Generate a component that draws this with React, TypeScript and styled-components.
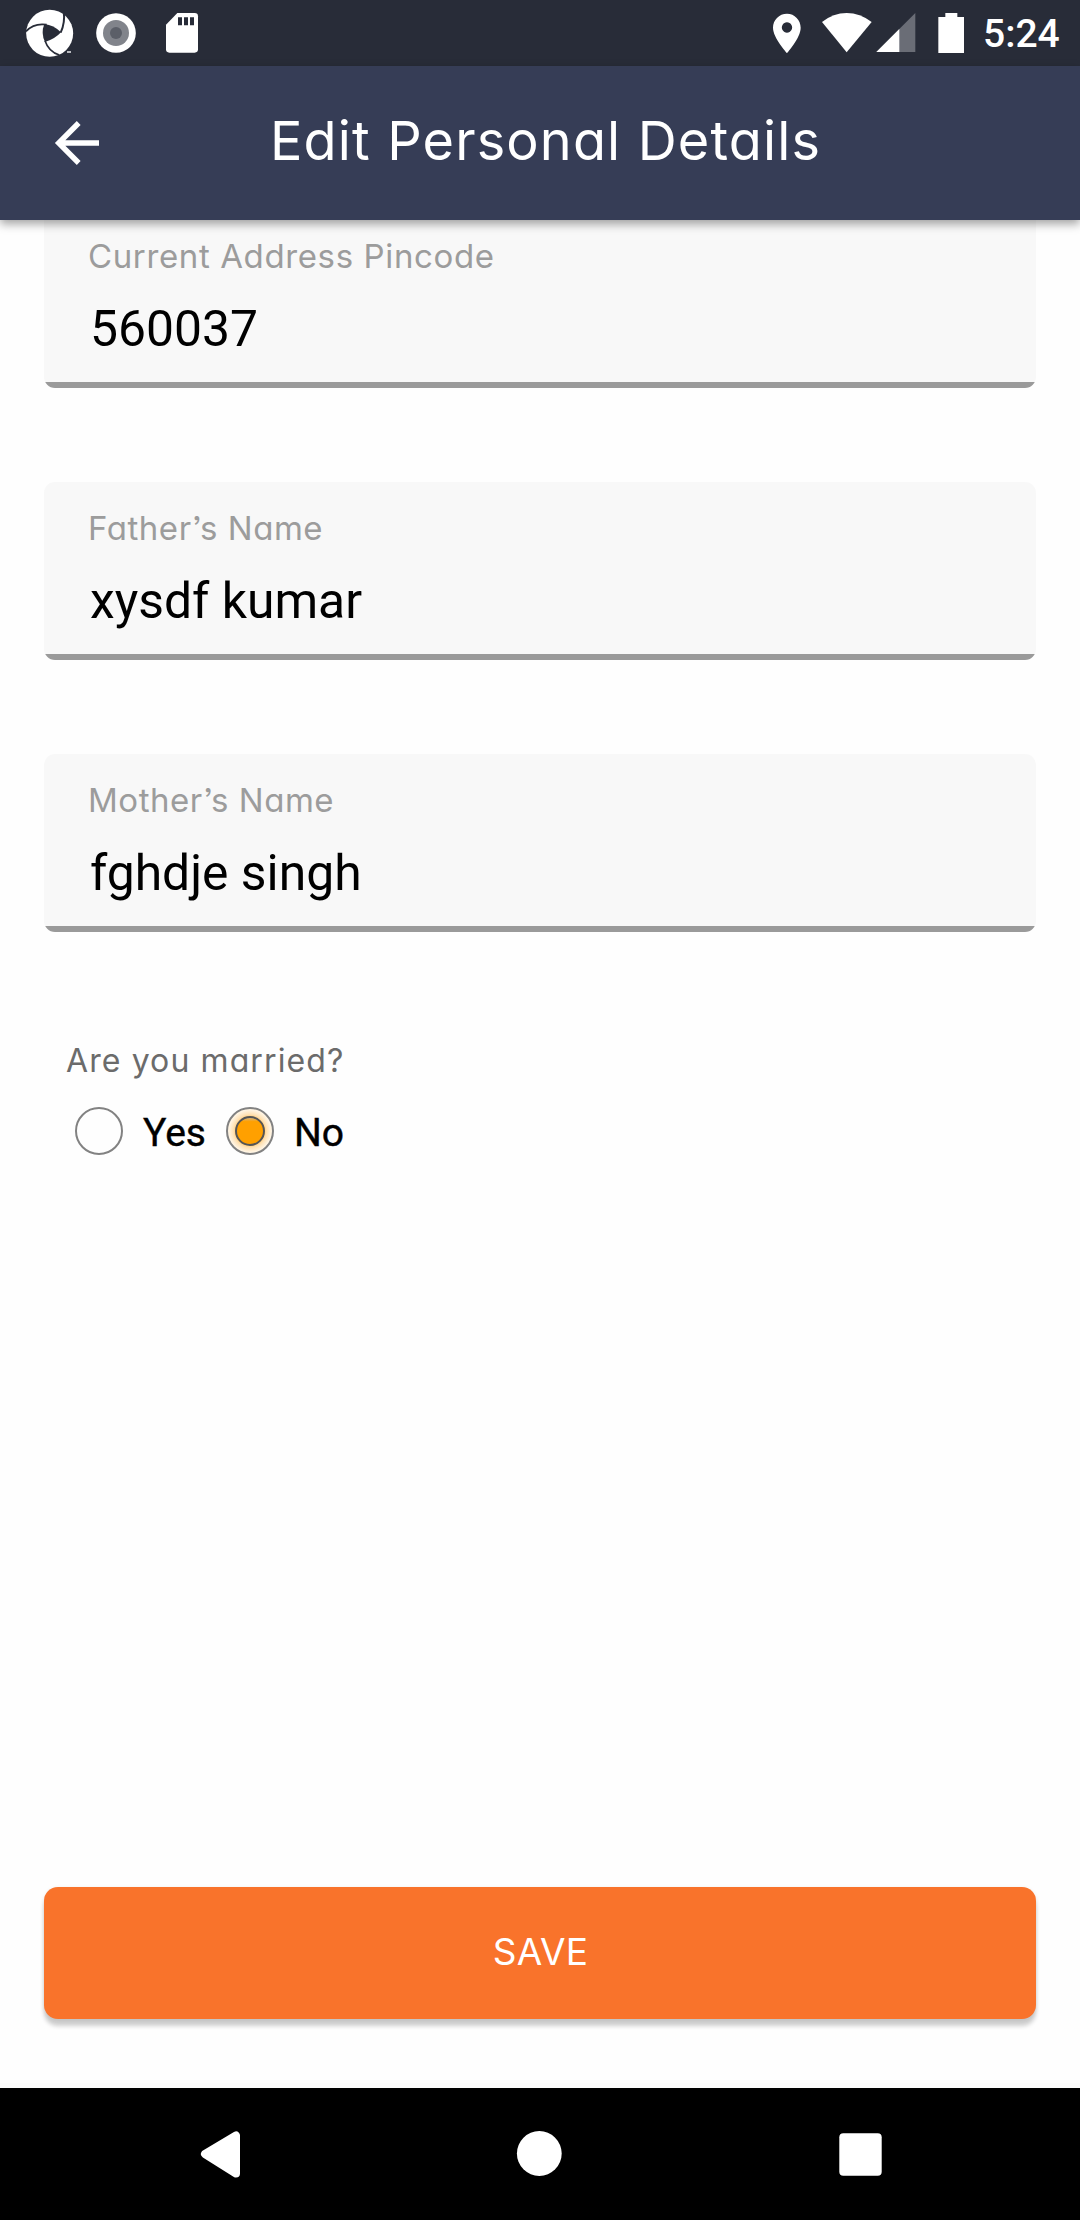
import React, { useState } from "react";
import styled, { createGlobalStyle } from "styled-components";

const GlobalStyle = createGlobalStyle`
  * { box-sizing: border-box; }
  body { margin: 0; background: #fefefe; }
`;

const heading = `
  font-family: Inter, "Open Sans", sans-serif;
  font-feature-settings: "cv11", "ss03";
`;

const Screen = styled.div`
  width: 1080px;
  height: 2220px;
  display: flex;
  flex-direction: column;
  background: #fefefe;
  font-family: Roboto, sans-serif;
  overflow: hidden;
`;

const StatusBar = styled.div`
  flex: none;
  height: 66px;
  display: flex;
  justify-content: space-between;
  background: #282c38;
`;

const StatusClock = styled.span`
  margin-left: 19px;
  width: 97px;
  font-size: 39px;
  font-weight: 500;
  line-height: 69px;
  color: #fff;
`;

const StatusGroup = styled.div`
  display: flex;
`;

const AppBar = styled.header`
  flex: none;
  position: relative;
  z-index: 1;
  height: 154px;
  display: flex;
  align-items: center;
  background: #363d56;
  box-shadow: 0 4px 9px rgba(0, 0, 0, 0.36);
`;

const BackButton = styled.button`
  width: 154px;
  height: 154px;
  padding: 0;
  border: 0;
  background: none;
`;

const Title = styled.h1`
  ${heading}
  margin: 0 0 4px 116px;
  font-size: 54px;
  font-weight: 400;
  line-height: 80px;
  letter-spacing: 1.15px;
  white-space: nowrap;
  color: #fff;
`;

const Content = styled.main`
  flex: 1;
  min-height: 0;
  display: flex;
  flex-direction: column;
  gap: 94px;
  padding: 0 44px;
  margin-top: -10px;
`;

const Field = styled.label`
  flex: none;
  display: flex;
  flex-direction: column;
  height: 178px;
  padding: 24px 44px 0;
  border-radius: 11px;
  background: linear-gradient(to bottom, #f8f8f8 172px, #9a9a9a 172px);
`;

const FieldLabel = styled.span<{ $spacing: number }>`
  ${heading}
  height: 44px;
  font-size: 33px;
  font-weight: 400;
  line-height: 44px;
  letter-spacing: ${(p) => p.$spacing}px;
  color: #9c9c9c;
`;

const FieldInput = styled.input`
  width: 100%;
  height: 60px;
  margin-top: 21px;
  padding: 0 0 0 2px;
  border: 0;
  outline: 0;
  background: transparent;
  font-family: Roboto, sans-serif;
  font-size: 49.8px;
  color: #000;
`;

const Question = styled.section`
  display: flex;
  flex-direction: column;
  margin-top: 13px;
  padding-left: 22px;
`;

const QuestionText = styled.span`
  ${heading}
  height: 44px;
  font-size: 32px;
  line-height: 44px;
  letter-spacing: 1.1px;
  color: #6b6b6b;
`;

const Options = styled.div`
  display: flex;
  margin: 24px 0 0 9px;
`;

const Option = styled.button`
  display: flex;
  align-items: center;
  gap: 20px;
  width: 151px;
  height: 48px;
  padding: 0;
  border: 0;
  background: none;
  font-family: Roboto, sans-serif;
  font-size: 39px;
  line-height: 48px;
  color: #000;
`;

const RadioRing = styled.span<{ $on: boolean }>`
  width: 48px;
  height: 48px;
  display: flex;
  align-items: center;
  justify-content: center;
  border: 2px solid #828282;
  border-radius: 50%;
  background: ${(p) =>
    p.$on
      ? "radial-gradient(closest-side, #ffc566 60%, #ffe2b5 76%, #fff4e2 96%)"
      : "transparent"};
`;

const RadioDot = styled.span`
  width: 30px;
  height: 30px;
  border: 2px solid #555;
  border-radius: 50%;
  background: linear-gradient(#d8b47a, #ffa000 14%);
`;

const OptionText = styled.span`
  padding-top: 3px;
  -webkit-text-stroke: 0.4px #000;
`;

const Footer = styled.footer`
  flex: none;
  height: 201px;
  padding: 0 44px;
  border-bottom: 5px solid #fcfcfc;
`;

const SaveButton = styled.button`
  ${heading}
  width: 100%;
  height: 132px;
  padding: 0 0 4px 1px;
  border: 0;
  border-radius: 14px;
  background: #f9732b;
  box-shadow: 0 7px 4px rgba(0, 0, 0, 0.19), 0 1px 4px rgba(0, 0, 0, 0.08);
  font-size: 37px;
  letter-spacing: 0.3px;
  color: #fff;
`;

const NavBar = styled.nav`
  flex: none;
  height: 132px;
  background: #000;
`;

function StatusLeft() {
  return (
    <svg width="210" height="66" viewBox="0 0 630 198" fill="#fff">
      <circle cx="149" cy="100" r="70.5" />
      <path d="M133 72Q161 75 183 97Q165 117 135 126Q122 99 133 72Z" fill="#282c38" />
      <g fill="none" stroke="#282c38" strokeWidth="5">
        <path d="M78 94Q102 68 140 74" />
        <path d="M191 33Q196 68 182 98" strokeWidth="6" />
        <path d="M135 122Q146 155 178 165" />
      </g>
      <path d="M201 153h12v6h-12z" fill="#b9bbc0" />
      <circle cx="348" cy="99" r="59.5" />
      <circle cx="348" cy="99" r="39" fill="#81848b" />
      <circle cx="348" cy="99" r="18" fill="#5b5f68" />
      <path d="M532 39H584Q594 39 594 49V148Q594 158 584 158H508Q498 158 498 148V74Z" />
      <path d="M534 52h12v24h-12zM552 52h12v24h-12zM570 52h12v24h-12z" fill="#282c38" />
    </svg>
  );
}

function StatusRight() {
  return (
    <svg width="197" height="66" viewBox="77 0 591 198" fill="#fff">
      <path
        fillRule="evenodd"
        d="M137 41C113 41 95 60 95 83C95 114 137 159 137 159S178 114 178 83C178 60 160 41 137 41ZM137 67A15.500 15.500 0 1 1 136.900 67Z"
      />
      <path d="M242 66Q276 39 316 39T391 66L316 157Z" />
      <path d="M522 39V156H405Z" fill="#6a6d76" />
      <path d="M474 87V156H405Z" />
      <path d="M612 39H648V51H669V159H591V51H612Z" />
    </svg>
  );
}

function BackArrow() {
  return (
    <svg width="154" height="154" viewBox="0 0 154 154" fill="none" stroke="#fff" strokeWidth="5.400">
      <path d="M99 77H60M78.700 57L58.700 77L78.700 97" />
    </svg>
  );
}

function NavIcons() {
  return (
    <svg width="1080" height="132" viewBox="0 0 1080 132" fill="#fff">
      <path d="M205 66L236 47.500V85.500Z" stroke="#fff" strokeWidth="8" strokeLinejoin="round" />
      <circle cx="539.300" cy="65.500" r="22.400" />
      <rect x="839.300" y="45.300" width="42.400" height="42.400" rx="4" />
    </svg>
  );
}

const FIELDS = [
  { label: "Current Address Pincode", value: "560037", spacing: 0.62 },
  { label: "Father’s Name", value: "xysdf kumar", spacing: 0.54 },
  { label: "Mother’s Name", value: "fghdje singh", spacing: 0.52 },
];

export default function App() {
  const [married, setMarried] = useState("No");
  return (
    <Screen>
      <GlobalStyle />
      <StatusBar>
        <StatusLeft />
        <StatusGroup>
          <StatusRight />
          <StatusClock>5:24</StatusClock>
        </StatusGroup>
      </StatusBar>
      <AppBar>
        <BackButton aria-label="Back">
          <BackArrow />
        </BackButton>
        <Title>Edit Personal Details</Title>
      </AppBar>
      <Content>
        {FIELDS.map((f) => (
          <Field key={f.label}>
            <FieldLabel $spacing={f.spacing}>{f.label}</FieldLabel>
            <FieldInput defaultValue={f.value} spellCheck={false} />
          </Field>
        ))}
        <Question>
          <QuestionText>Are you married?</QuestionText>
          <Options>
            {["Yes", "No"].map((o) => (
              <Option key={o} onClick={() => setMarried(o)}>
                <RadioRing $on={married === o}>{married === o && <RadioDot />}</RadioRing>
                <OptionText>{o}</OptionText>
              </Option>
            ))}
          </Options>
        </Question>
      </Content>
      <Footer>
        <SaveButton>SAVE</SaveButton>
      </Footer>
      <NavBar>
        <NavIcons />
      </NavBar>
    </Screen>
  );
}
